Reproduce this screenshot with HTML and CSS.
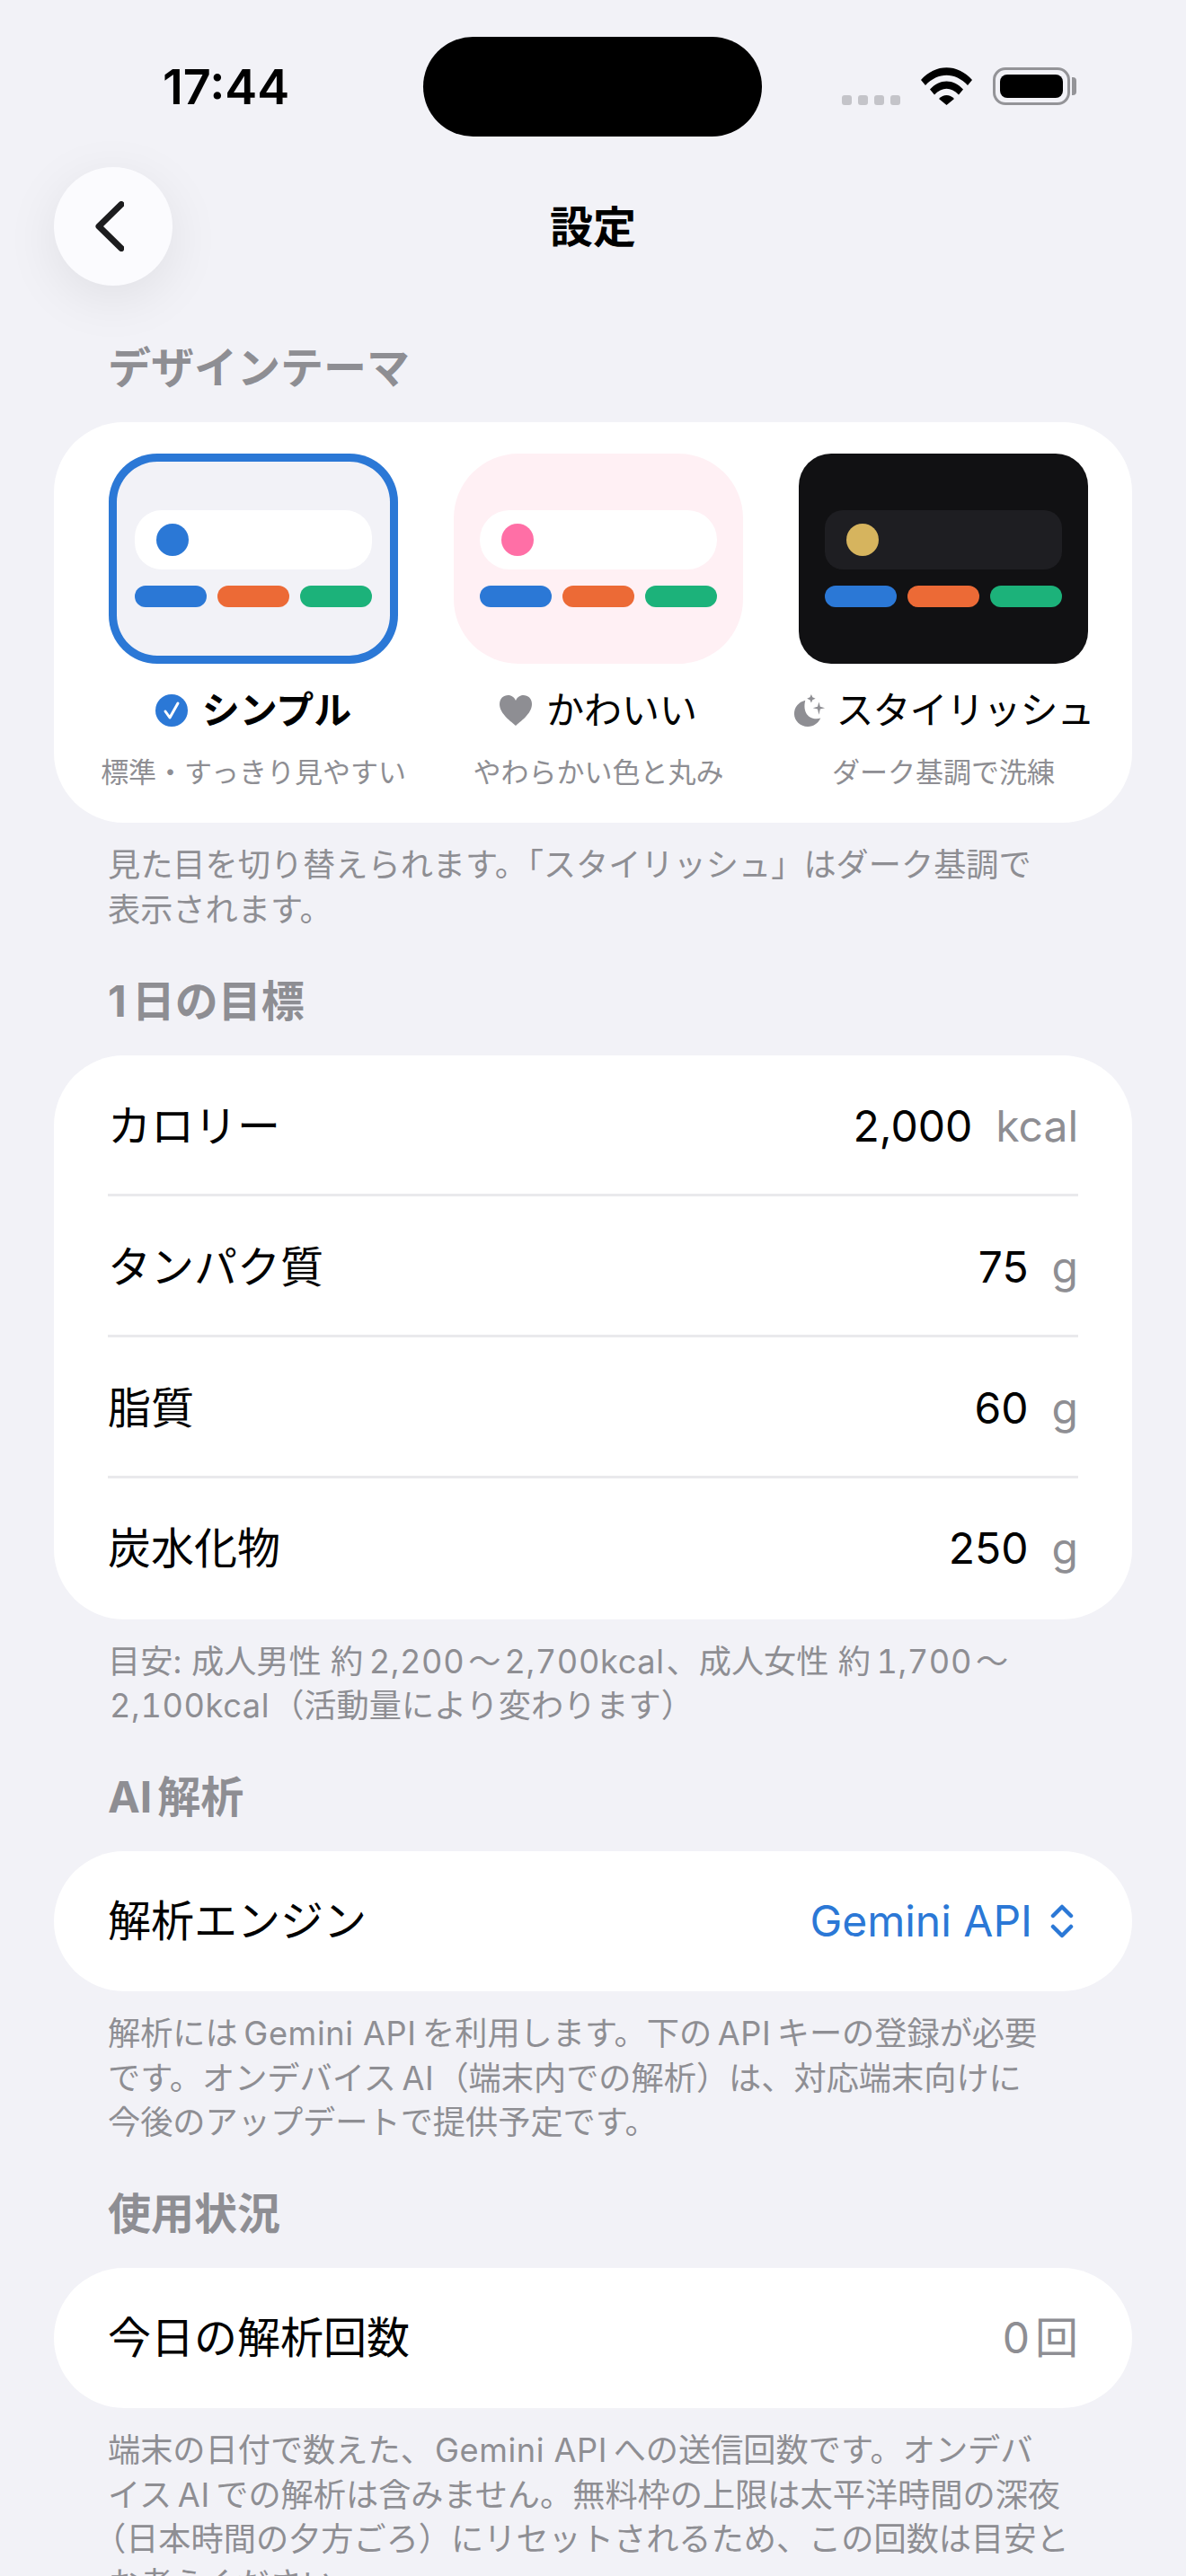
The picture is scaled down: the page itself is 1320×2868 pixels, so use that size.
FILE: index.html
```html
<!DOCTYPE html>
<html lang="ja">
<head>
<meta charset="utf-8">
<title>設定</title>
<link rel="stylesheet" href="styles.css">
</head>
<body>
<div class="page">
  <header class="status">
    <div class="time">17:44</div>
    <div class="island"></div>
    <div class="status-right">
      <div class="signal"><i></i><i></i><i></i><i></i></div>
      <svg class="wifi" viewBox="0 0 57 42" aria-hidden="true"><path d="M0 14 C16 -4.500 41 -4.500 57 14 L52 20 C38 5 19 5 5 20 Z"/><path d="M10 24.500 C21 12.500 36 12.500 47 24.500 L42 30.500 C33.500 21.500 23.500 21.500 15 30.500 Z"/><path d="M20 35 C25 29.500 32 29.500 37 35 L28.500 42 Z"/></svg>
      <div class="battery"><div class="battery-body"><div class="battery-fill"></div></div><div class="battery-cap"></div></div>
    </div>
  </header>

  <nav class="nav">
    <button class="back" aria-label="戻る">
      <svg viewBox="0 0 32 56" aria-hidden="true"><path d="M29 3.500 L4 28 L29 52.500"/></svg>
    </button>
    <h1 class="title">設定</h1>
  </nav>

  <section class="section section-first">
    <h2 class="heading">デザインテーマ</h2>
    <div class="card themes">
      <div class="theme">
        <div class="tile tile-simple selected">
          <div class="bar"><span class="dot dot-blue"></span></div>
          <div class="pills"><span class="pill p-blue"></span><span class="pill p-orange"></span><span class="pill p-green"></span></div>
        </div>
        <div class="theme-label strong">
          <svg class="label-icon" viewBox="0 0 36 36" aria-hidden="true"><circle cx="18" cy="18" r="18" fill="#2b78d6"/><path d="M11 19 L16 26 L25 10" fill="none" stroke="#fff" stroke-width="3" stroke-linecap="round" stroke-linejoin="round"/></svg>
          <span>シンプル</span>
        </div>
        <div class="theme-sub">標準・すっきり見やすい</div>
      </div>
      <div class="theme">
        <div class="tile tile-cute">
          <div class="bar"><span class="dot dot-pink"></span></div>
          <div class="pills"><span class="pill p-blue"></span><span class="pill p-orange"></span><span class="pill p-green"></span></div>
        </div>
        <div class="theme-label">
          <svg class="label-icon" viewBox="0 0 36 36" aria-hidden="true"><path fill="#8e8e93" d="M18 35 C14 31 0 22 0 11 C0 4.500 4.500 1 9.500 1 C13.500 1 16.500 3.500 18 7 C19.500 3.500 22.500 1 26.500 1 C31.500 1 36 4.500 36 11 C36 22 22 31 18 35 Z"/></svg>
          <span>かわいい</span>
        </div>
        <div class="theme-sub">やわらかい色と丸み</div>
      </div>
      <div class="theme">
        <div class="tile tile-dark">
          <div class="bar"><span class="dot dot-gold"></span></div>
          <div class="pills"><span class="pill p-blue"></span><span class="pill p-orange"></span><span class="pill p-green"></span></div>
        </div>
        <div class="theme-label narrow">
          <svg class="label-icon" viewBox="0 0 36 38" aria-hidden="true"><path fill="#8e8e93" d="M13 7 C5 9 0 15 0 23 C0 31 7 38 16 38 C23 38 28 34 31 28 C20 31 9 24 13 7 Z"/><path fill="#8e8e93" d="M20 0 L21.500 3.500 L25 5 L21.500 6.500 L20 10 L18.500 6.500 L15 5 L18.500 3.500 Z"/><path fill="#8e8e93" d="M29 9 L30.500 14.500 L36 16 L30.500 17.500 L29 24 L27.500 17.500 L22 16 L27.500 14.500 Z"/></svg>
          <span>スタイリッシュ</span>
        </div>
        <div class="theme-sub">ダーク基調で洗練</div>
      </div>
    </div>
    <p class="note">見た目を切り替えられます。「スタイリッシュ」はダーク基調で<br>表示されます。</p>
  </section>

  <section class="section">
    <h2 class="heading">1日の目標</h2>
    <div class="card">
      <div class="row"><span class="row-label">カロリー</span><span class="row-value"><span class="num">2,000</span><span class="unit">kcal</span></span></div>
      <div class="row"><span class="row-label">タンパク質</span><span class="row-value"><span class="num">75</span><span class="unit">g</span></span></div>
      <div class="row"><span class="row-label">脂質</span><span class="row-value"><span class="num">60</span><span class="unit">g</span></span></div>
      <div class="row"><span class="row-label">炭水化物</span><span class="row-value"><span class="num">250</span><span class="unit">g</span></span></div>
    </div>
    <p class="note">目安: 成人男性 約<span class="en">2,200</span><span class="tilde">〜</span><span class="en">2,700kcal</span>、成人女性 約<span class="en">1,700</span><span class="tilde">〜</span><br><span class="en">2,100kcal</span>（活動量により変わります）</p>
  </section>

  <section class="section">
    <h2 class="heading">AI解析</h2>
    <div class="card">
      <div class="row"><span class="row-label">解析エンジン</span><span class="row-value picker">Gemini API<svg class="updown" viewBox="0 0 26 38" aria-hidden="true"><path d="M3 13 L13 3 L23 13 M3 25 L13 35 L23 25"/></svg></span></div>
    </div>
    <p class="note">解析には<span class="en">Gemini API</span>を利用します。下の<span class="en">API</span>キーの登録が必要<br>です。オンデバイス<span class="en">AI</span>（端末内での解析）は、対応端末向けに<br>今後のアップデートで提供予定です。</p>
  </section>

  <section class="section">
    <h2 class="heading">使用状況</h2>
    <div class="card">
      <div class="row"><span class="row-label">今日の解析回数</span><span class="row-value muted">0回</span></div>
    </div>
    <p class="note">端末の日付で数えた、<span class="en">Gemini API</span>への送信回数です。オンデバ<br>イス<span class="en">AI</span>での解析は含みません。無料枠の上限は太平洋時間の深夜<br><span class="hang">（</span>日本時間の夕方ごろ）にリセットされるため、この回数は目安と<br>お考えください。</p>
  </section>
</div>
</body>
</html>
```
FILE: styles.css
```css
* { box-sizing: border-box; }
html, body { margin: 0; padding: 0; height: 2868px; overflow: hidden; }
body {
  background: #f2f2f7;
  color: #000;
  font-family: Inter, "Noto Sans CJK JP", sans-serif;
  text-autospace: normal;
}
.page { width: 1320px; }

/* status bar */
.status {
  height: 186px;
  display: grid;
  grid-template-columns: 471px 377px 1fr;
  align-items: start;
}
.time {
  margin-top: 66px;
  padding-left: 181px;
  font-size: 54px;
  line-height: 62px;
  font-weight: 600;
}
.island { margin-top: 41px; height: 111px; border-radius: 56px; background: #000; }
.status-right { margin-top: 75px; padding-left: 89px; display: flex; align-items: flex-start; }
.signal { display: flex; gap: 7px; margin-top: 31px; width: 65px; }
.signal i { width: 11px; height: 11px; border-radius: 3px; background: #c4c4c9; }
.wifi { width: 57px; height: 42px; margin-left: 23px; fill: #000; }
.battery { display: flex; align-items: center; margin-left: 23px; }
.battery-body { width: 86px; height: 42px; padding: 5px; border: 3px solid #949498; border-radius: 14px; }
.battery-fill { height: 100%; background: #000; border-radius: 8px; }
.battery-cap { width: 5px; height: 20px; margin-left: 2px; background: #949498; border-radius: 0 4px 4px 0; }

/* nav */
.nav {
  display: grid;
  grid-template-columns: 132px 1fr 132px;
  align-items: center;
  height: 132px;
  padding: 0 60px;
}
.back {
  width: 132px;
  height: 132px;
  padding: 0;
  border: 0;
  border-radius: 50%;
  background: #fbfbfe;
  box-shadow: 0 14px 60px rgba(0, 0, 0, .08);
  display: flex;
  align-items: center;
  justify-content: center;
}
.back svg { width: 32px; height: 56px; margin-right: 8px; fill: none; stroke: #1c1c1e; stroke-width: 7; stroke-linecap: round; stroke-linejoin: round; }
.title { margin: 2px 0 0; text-align: center; font-size: 48px; line-height: 60px; font-weight: 700; }

/* sections */
.section { margin-top: 44.500px; }
.section-first { margin-top: 60px; }
.heading {
  margin: 0 0 30px;
  padding: 2px 0 0 120px;
  font-size: 48px;
  line-height: 60px;
  font-weight: 700;
  color: #8e8e93;
}
.card { margin: 0 60px; background: #fff; border-radius: 78px; overflow: hidden; }
.note {
  margin: 23px 0 0;
  padding-left: 120px;
  font-size: 36.200px;
  line-height: 49.500px;
  color: #8e8e93;
  white-space: nowrap;
}
.en { letter-spacing: .6px; margin: 0 2px; font-feature-settings: "tnum" 1; }
.tilde { margin: 0 2px; }
.hang { margin-left: -16px; }

/* theme chooser */
.themes {
  height: 446px;
  padding: 35px 49px 0 61px;
  display: flex;
  gap: 62px;
  overflow: visible;
}
.theme { width: 322px; display: flex; flex-direction: column; align-items: center; }
.tile {
  width: 322px;
  height: 234px;
  flex: none;
  padding: 63px 29px 0;
  display: flex;
  flex-direction: column;
  gap: 18px;
}
.tile-simple { background: #f2f2f7; border-radius: 54px; box-shadow: inset 0 0 0 9px #2b78d6; }
.tile-cute { background: #fff0f4; border-radius: 72px; }
.tile-dark { background: #111113; border-radius: 36px; }
.bar { height: 66px; border-radius: 30px; background: #fff; padding: 15px 24px; }
.tile-cute .bar { border-radius: 33px; }
.tile-dark .bar { background: #1e1e22; border-radius: 20px; }
.dot { display: block; width: 36px; height: 36px; border-radius: 50%; }
.dot-blue { background: #2b78d6; }
.dot-pink { background: #ff6fa6; }
.dot-gold { background: #d6b45e; }
.pills { display: flex; gap: 12px; }
.pill { flex: 1; height: 24px; border-radius: 12px; }
.p-blue { background: #2b78d6; }
.p-orange { background: #ec6a36; }
.p-green { background: #1cb27a; }
.theme-label {
  margin-top: 22px;
  display: flex;
  align-items: center;
  gap: 16px;
  font-size: 42px;
  line-height: 60px;
  white-space: nowrap;
}
.theme-label.strong { font-weight: 700; }
.theme-label.narrow { gap: 12px; letter-spacing: -1px; }
.label-icon { width: 36px; height: 36px; flex: none; }
.theme-sub { margin-top: 19px; font-size: 31px; line-height: 40px; color: #8e8e93; white-space: nowrap; }

/* rows */
.row {
  height: 157px;
  margin: 0 60px;
  padding-top: 4px;
  display: flex;
  align-items: center;
  justify-content: space-between;
  font-size: 48px;
  line-height: 60px;
  border-top: 3px solid #e9e9ec;
}
.row:first-child { height: 154px; border-top: 0; }
.row:last-child { height: 160px; padding-top: 0; }
.card > .row:only-child { height: 156px; border-top: 0; padding-top: 0; }
.row-value { display: flex; align-items: baseline; }
.unit { margin-left: 26px; color: #8e8e93; }
.picker { color: #2b78d6; align-items: center; }
.updown { width: 26px; height: 38px; margin-left: 20px; margin-right: 5px; fill: none; stroke: #2b78d6; stroke-width: 4.500; stroke-linecap: round; stroke-linejoin: round; }
.muted { color: #8e8e93; }
```
